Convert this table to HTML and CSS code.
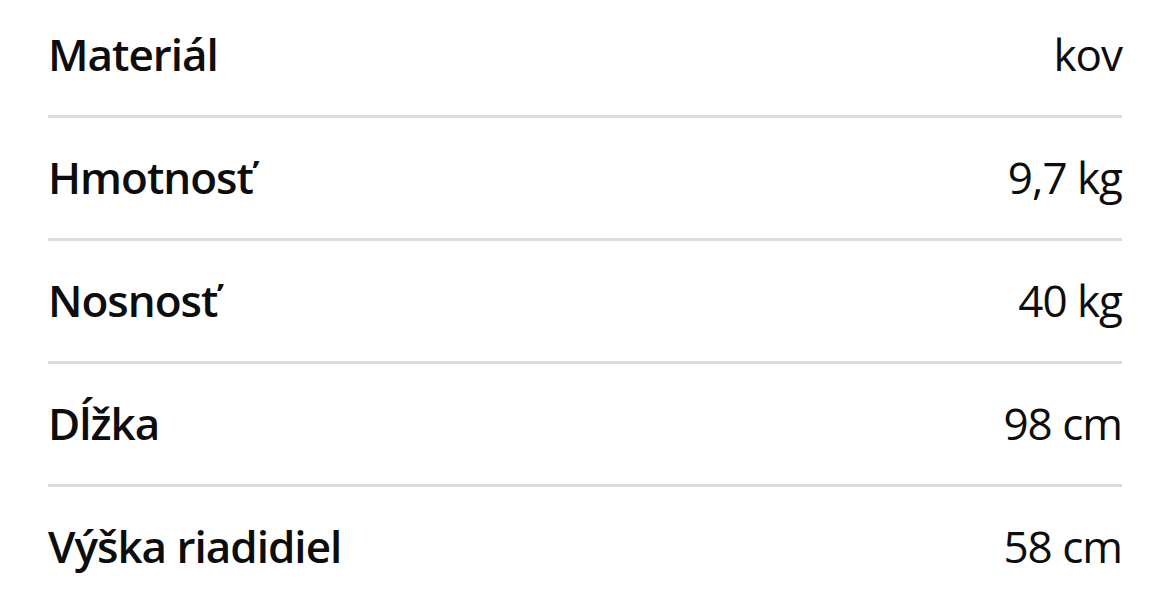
FILE: index.html
```html
<!DOCTYPE html>
<html lang="sk">
<head>
<meta charset="utf-8">
<title>Parametre</title>
<link rel="stylesheet" href="styles.css">
</head>
<body>
<dl class="specs">
  <div class="row first"><dt>Materiál</dt><dd>kov</dd></div>
  <div class="row"><dt>Hmotnosť</dt><dd>9,7 kg</dd></div>
  <div class="row"><dt>Nosnosť</dt><dd>40 kg</dd></div>
  <div class="row"><dt>Dĺžka</dt><dd>98 cm</dd></div>
  <div class="row last"><dt>Výška riadidiel</dt><dd>58 cm</dd></div>
</dl>
</body>
</html>
```
FILE: styles.css
```css
html, body {
  margin: 0;
  padding: 0;
  background: #ffffff;
}
body {
  font-family: "Open Sans", "Noto Sans", sans-serif;
  color: #0d0d0d;
  overflow: hidden;
}
.specs {
  margin: 0 48px;
  padding: 0;
}
.row {
  display: flex;
  justify-content: space-between;
  align-items: baseline;
  padding: 29px 0 31px;
  font-size: 44px;
  line-height: 60px;
  letter-spacing: -1px;
  border-bottom: 3px solid #dcdcdc;
}
.row.first {
  padding-top: 24px;
}
.row.last {
  border-bottom: none;
}
.row dt {
  font-weight: 600;
  margin: 0;
}
.row dd {
  font-weight: 400;
  margin: 0;
  text-align: right;
}
```
